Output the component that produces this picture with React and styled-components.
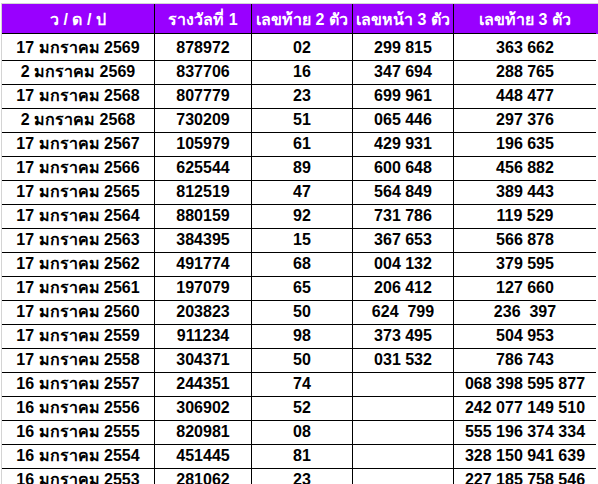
import React from "react";
import styled, { createGlobalStyle } from "styled-components";

const GlobalStyle = createGlobalStyle`
  html, body {
    margin: 0;
    padding: 0;
    background: #ffffff;
  }
  body {
    font-family: "Liberation Sans", Arial, "Noto Sans", "DejaVu Sans", sans-serif;
  }
`;

const COLS = "153px 97px 101px 101px 142px";

const Sheet = styled.div`
  margin-top: 3px;
  margin-left: 1px;
  border-top: 1px solid #d4d4d4;
  border-left: 1px solid #d4d4d4;
  height: 480px;
  overflow: hidden;
`;

const Row = styled.div`
  display: grid;
  grid-template-columns: ${COLS};
  height: ${(p) => (p.$header ? "30px" : "24px")};
  background: ${(p) => (p.$header ? "#9900ff" : "#ffffff")};
  color: ${(p) => (p.$header ? "#ffffff" : "#000000")};
`;

const Cell = styled.div`
  box-sizing: border-box;
  border-bottom: 1px solid #000;
  border-right: ${(p) => (p.$last ? "none" : "1px solid #000")};
  display: flex;
  align-items: center;
  justify-content: center;
  font-size: 16px;
  font-weight: bold;
  white-space: pre;
  padding-top: ${(p) => (p.$header ? "2px" : "1px")};
`;

const headers = ["ว / ด / ป", "รางวัลที่ 1", "เลขท้าย 2 ตัว", "เลขหน้า 3 ตัว", "เลขท้าย 3 ตัว"];

const rows = [
  ["17 มกราคม 2569", "878972", "02", "299 815", "363 662"],
  ["2 มกราคม 2569", "837706", "16", "347 694", "288 765"],
  ["17 มกราคม 2568", "807779", "23", "699 961", "448 477"],
  ["2 มกราคม 2568", "730209", "51", "065 446", "297 376"],
  ["17 มกราคม 2567", "105979", "61", "429 931", "196 635"],
  ["17 มกราคม 2566", "625544", "89", "600 648", "456 882"],
  ["17 มกราคม 2565", "812519", "47", "564 849", "389 443"],
  ["17 มกราคม 2564", "880159", "92", "731 786", "119 529"],
  ["17 มกราคม 2563", "384395", "15", "367 653", "566 878"],
  ["17 มกราคม 2562", "491774", "68", "004 132", "379 595"],
  ["17 มกราคม 2561", "197079", "65", "206 412", "127 660"],
  ["17 มกราคม 2560", "203823", "50", "624  799", "236  397"],
  ["17 มกราคม 2559", "911234", "98", "373 495", "504 953"],
  ["17 มกราคม 2558", "304371", "50", "031 532", "786 743"],
  ["16 มกราคม 2557", "244351", "74", "", "068 398 595 877"],
  ["16 มกราคม 2556", "306902", "52", "", "242 077 149 510"],
  ["16 มกราคม 2555", "820981", "08", "", "555 196 374 334"],
  ["16 มกราคม 2554", "451445", "81", "", "328 150 941 639"],
  ["16 มกราคม 2553", "281062", "23", "", "227 185 758 546"],
];

export default function App() {
  return (
    <>
      <GlobalStyle />
      <Sheet>
        <Row $header>
          {headers.map((h, i) => (
            <Cell key={i} $header $last={i === headers.length - 1}>
              {h}
            </Cell>
          ))}
        </Row>
        {rows.map((r, ri) => (
          <Row key={ri}>
            {r.map((v, i) => (
              <Cell key={i} $last={i === r.length - 1}>
                {v}
              </Cell>
            ))}
          </Row>
        ))}
      </Sheet>
    </>
  );
}
